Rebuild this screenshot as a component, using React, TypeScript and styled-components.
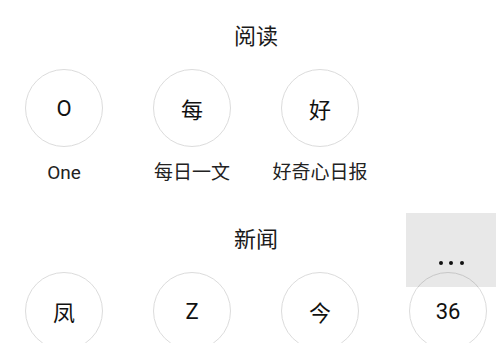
import React from 'react';
import styled, { createGlobalStyle } from 'styled-components';

const GlobalStyle = createGlobalStyle`
  html, body {
    margin: 0;
    padding: 0;
    background: #ffffff;
    overflow: hidden;
  }
  body {
    font-family: Roboto, "Noto Sans CJK SC", sans-serif;
    color: #222222;
  }
`;

const Page = styled.div`
  position: relative;
  width: 512px;
`;

const Section = styled.section`
  display: flex;
  flex-direction: column;
`;

const SectionTitle = styled.h2`
  margin: 0;
  padding-top: 14px;
  line-height: 46px;
  font-size: 22px;
  font-weight: 400;
  text-align: center;
  color: #1a1a1a;
`;

const Grid = styled.div`
  display: grid;
  grid-template-columns: repeat(4, 128px);
`;

const Item = styled.div`
  display: flex;
  flex-direction: column;
  align-items: center;
  padding: 9px 0 17px;
`;

const Circle = styled.div`
  width: 76px;
  height: 76px;
  border-radius: 50%;
  border: 1px solid #dcdcdc;
  display: flex;
  align-items: center;
  justify-content: center;
  font-size: 22px;
  color: #111111;
`;

const Label = styled.div`
  margin-top: 13px;
  line-height: 26px;
  font-size: 19px;
  color: #222222;
  white-space: nowrap;
`;

const MoreButton = styled.div`
  position: absolute;
  left: 406px;
  top: 213px;
  width: 90px;
  height: 74px;
  background: rgba(0, 0, 0, 0.09);
  display: flex;
  align-items: flex-end;
  justify-content: center;
  gap: 6.5px;
  padding-bottom: 22px;
  box-sizing: border-box;
`;

const Dot = styled.span`
  width: 4px;
  height: 4px;
  border-radius: 50%;
  background: #111111;
`;

type Source = { mark: string; name: string };

const sections: { title: string; items: Source[] }[] = [
  {
    title: '阅读',
    items: [
      { mark: 'O', name: 'One' },
      { mark: '每', name: '每日一文' },
      { mark: '好', name: '好奇心日报' },
    ],
  },
  {
    title: '新闻',
    items: [
      { mark: '凤', name: '凤凰新闻' },
      { mark: 'Z', name: 'ZAKER' },
      { mark: '今', name: '今日头条' },
      { mark: '36', name: '36氪' },
    ],
  },
];

export default function App() {
  return (
    <>
      <GlobalStyle />
      <Page>
        {sections.map((section) => (
          <Section key={section.title}>
            <SectionTitle>{section.title}</SectionTitle>
            <Grid>
              {section.items.map((item) => (
                <Item key={item.name}>
                  <Circle>{item.mark}</Circle>
                  <Label>{item.name}</Label>
                </Item>
              ))}
            </Grid>
          </Section>
        ))}
        <MoreButton aria-label="更多">
          <Dot />
          <Dot />
          <Dot />
        </MoreButton>
      </Page>
    </>
  );
}
